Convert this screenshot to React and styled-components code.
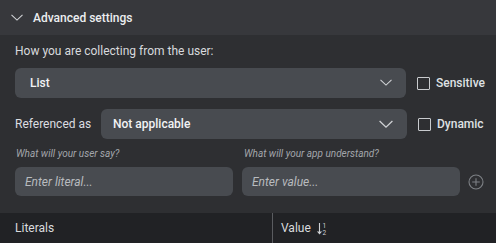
import React from 'react';
import styled, { createGlobalStyle } from 'styled-components';

const GlobalStyle = createGlobalStyle`
  html, body {
    margin: 0;
    padding: 0;
    background: #2e2f32;
  }
  body {
    font-family: Roboto, "Liberation Sans", sans-serif;
    color: #e6e7e9;
  }
`;

const Panel = styled.div`
  width: 496px;
  height: 243px;
  display: flex;
  flex-direction: column;
  background: #2e2f32;
  overflow: hidden;
`;

const Header = styled.div`
  height: 35px;
  display: flex;
  align-items: center;
  gap: 10px;
  padding-left: 11px;
  background: #37383c;
  font-size: 12px;
  font-weight: 500;
  color: #eceef0;
  box-sizing: border-box;
`;

const Body = styled.div`
  flex: 1;
  padding: 8px 0 0 15px;
  display: flex;
  flex-direction: column;
`;

const Caption = styled.div`
  font-size: 12px;
  color: #d8dadd;
  height: 17px;
  line-height: 17px;
`;

const Row = styled.div`
  display: flex;
  align-items: center;
  margin-top: ${p => p.$top || 0}px;
`;

const Label = styled.div`
  font-size: 12px;
  color: #dcdee1;
  width: 86px;
`;

const Select = styled.div`
  width: ${p => p.$width}px;
  height: 30px;
  border-radius: 6px;
  background: #484b50;
  display: flex;
  align-items: center;
  justify-content: space-between;
  padding: 0 14px 0 ${p => p.$pad}px;
  box-sizing: border-box;
  font-size: 12px;
  font-weight: 500;
  color: #f2f3f5;
`;

const Check = styled.label`
  display: flex;
  align-items: center;
  gap: 6px;
  margin-left: ${p => p.$gap}px;
  font-size: 12px;
  font-weight: 500;
  color: #dfe1e4;
`;

const Box = styled.span`
  width: 11px;
  height: 11px;
  border: 1px solid #c9cbce;
  border-radius: 1px;
`;

const Hints = styled.div`
  display: flex;
  margin-top: 8px;
  font-size: 10px;
  font-style: italic;
  color: #a3a6ab;
  height: 13px;
  line-height: 13px;
`;

const Hint = styled.div`
  width: ${p => p.$width}px;
  padding-left: 1px;
`;

const Inputs = styled.div`
  display: flex;
  align-items: center;
  gap: 9px;
  margin-top: 7px;
`;

const Field = styled.div`
  width: 218px;
  height: 29px;
  border-radius: 6px;
  background: #484b50;
  display: flex;
  align-items: center;
  padding-left: 10px;
  box-sizing: border-box;
  font-size: 12px;
  font-style: italic;
  color: #b8bbbf;
`;

const AddBtn = styled.div`
  margin-left: -1px;
  display: flex;
`;

const TableHead = styled.div`
  height: 30px;
  display: flex;
  background: #212225;
  font-size: 12px;
  color: #d9dbde;
`;

const Col = styled.div`
  display: flex;
  align-items: center;
  gap: 6px;
  width: ${p => p.$width ? p.$width + 'px' : 'auto'};
  flex: ${p => p.$width ? 'none' : 1};
  padding-left: ${p => p.$pad}px;
  box-sizing: border-box;
  border-left: ${p => p.$divider ? '1px solid #5a5c60' : 'none'};
`;

const Chevron = ({ size = 12, color = '#d0d2d5' }) => (
  <svg width={size} height={size * 0.6} viewBox="0 0 12 7" fill="none">
    <path d="M0.5 0.8 L6 6 L11.5 0.8" stroke={color} strokeWidth="1.1" />
  </svg>
);

const PlusCircle = () => (
  <svg width="16" height="16" viewBox="0 0 16 16" fill="none">
    <circle cx="8" cy="8" r="7" stroke="#7d8085" strokeWidth="1.1" />
    <path d="M8 4.2 V11.8 M4.2 8 H11.8" stroke="#7d8085" strokeWidth="1.1" />
  </svg>
);

const SortIcon = () => (
  <svg width="11" height="13" viewBox="0 0 11 13" fill="none">
    <path d="M2.5 1 V11.5 M0.6 9.4 L2.5 11.6 L4.4 9.4" stroke="#cfd1d4" strokeWidth="1.1" />
    <text x="5.6" y="6" fontSize="6.5" fill="#cfd1d4" fontFamily="Roboto, sans-serif">1</text>
    <text x="5.6" y="12.5" fontSize="6.5" fill="#cfd1d4" fontFamily="Roboto, sans-serif">2</text>
  </svg>
);

export default function App() {
  return (
    <>
      <GlobalStyle />
      <Panel>
        <Header>
          <Chevron size={12} />
          <span>Advanced settings</span>
        </Header>
        <Body>
          <Caption>How you are collecting from the user:</Caption>
          <Row $top={8}>
            <Select $width={391} $pad={15}>
              <span>List</span>
              <Chevron />
            </Select>
            <Check $gap={11}>
              <Box />
              Sensitive
            </Check>
          </Row>
          <Row $top={11}>
            <Label>Referenced as</Label>
            <Select $width={306} $pad={12}>
              <span>Not applicable</span>
              <Chevron size={14} />
            </Select>
            <Check $gap={11}>
              <Box />
              Dynamic
            </Check>
          </Row>
          <Hints>
            <Hint $width={227}>What will your user say?</Hint>
            <Hint>What will your app understand?</Hint>
          </Hints>
          <Inputs>
            <Field>Enter literal...</Field>
            <Field>Enter value...</Field>
            <AddBtn>
              <PlusCircle />
            </AddBtn>
          </Inputs>
        </Body>
        <TableHead>
          <Col $width={272} $pad={15}>Literals</Col>
          <Col $pad={8} $divider>
            Value
            <SortIcon />
          </Col>
        </TableHead>
      </Panel>
    </>
  );
}
